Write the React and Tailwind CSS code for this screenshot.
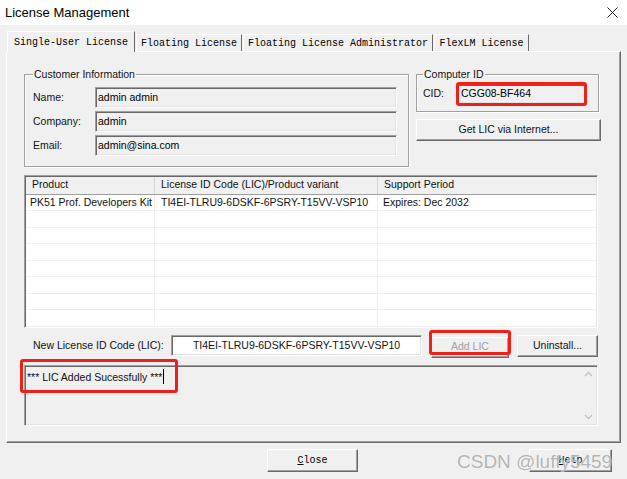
import React from "react";

const ui = { fontFamily: '"Liberation Sans", Arial, sans-serif' };
const mono = { fontFamily: '"Liberation Mono", "Courier New", monospace' };

const sunken =
  "border border-t-[#a0a0a0] border-l-[#a0a0a0] border-b-white border-r-white shadow-[inset_1px_1px_0_#696969,inset_-1px_-1px_0_#e3e3e3]";
const raised =
  "border border-t-white border-l-white border-b-[#696969] border-r-[#696969] shadow-[inset_-1px_-1px_0_#a0a0a0] bg-[#f0f0f0]";

const Tab = ({ label, width, active }) => (
  <div
    className={`flex justify-center border-l border-t border-r border-l-white border-t-white border-r-[#696969] text-[10px] text-black ${
      active ? "h-[21px] pt-[3px] z-10 -mb-px bg-[#f0f0f0]" : "h-[17px] pt-[1px] bg-[#f0f0f0]"
    }`}
    style={{ ...mono, width }}
  >
    {label}
  </div>
);

const Field = ({ label, value }) => (
  <div className="flex items-center h-[21px]">
    <span className="w-[62px] text-[10.5px] text-[#111]">{label}</span>
    <div className={`w-[302px] h-[21px] flex items-center px-[2px] text-[10.5px] bg-[#f0f0f0] ${sunken}`}>{value}</div>
  </div>
);

const RedBox = ({ className }) => (
  <div className={`absolute border-[3px] border-[#f02018] rounded-[3px] pointer-events-none ${className}`} />
);

export default function App() {
  return (
    <div className="relative w-[627px] h-[479px] bg-[#f0f0f0] overflow-hidden" style={ui}>
      {/* title bar */}
      <div className="h-[25px] bg-white flex items-center justify-between pl-[5px] pr-[9px]">
        <span className="text-[13px] text-black">License Management</span>
        <svg width="11" height="11" viewBox="0 0 11 11">
          <path d="M0.5 0.5 L10.5 10.5 M10.5 0.5 L0.5 10.5" stroke="#222" strokeWidth="1" fill="none" />
        </svg>
      </div>

      {/* tabs */}
      <div className="flex items-end h-[26px] pl-[7px] gap-[1px]">
        <Tab label="Single-User License" width={128} active />
        <Tab label="Floating License" width={106} />
        <Tab label="Floating License Administrator" width={190} />
        <Tab label="FlexLM License" width={95} />
      </div>

      {/* panel */}
      <div className="ml-[6px] w-[615px] h-[392px] border-l border-t border-l-white border-t-white border-r border-b border-r-[#696969] border-b-[#696969] shadow-[inset_-1px_-1px_0_#a0a0a0] pl-[17px] pt-[15px]">
        <div className="flex gap-[7px]">
          <fieldset className="w-[385px] h-[100px] border border-[#a0a0a0] shadow-[inset_1px_1px_0_#fff,1px_1px_0_#fff] px-[8px]">
            <legend className="px-[1px] text-[10.5px] leading-[14px] text-[#111]">Customer Information</legend>
            <div className="flex flex-col gap-[3px] mt-[6px]">
              <Field label="Name:" value="admin admin" />
              <Field label="Company:" value="admin" />
              <Field label="Email:" value="admin@sina.com" />
            </div>
          </fieldset>

          <div className="w-[185px] flex flex-col">
            <fieldset className="w-[183px] h-[45px] border border-[#a0a0a0] shadow-[inset_1px_1px_0_#fff,1px_1px_0_#fff] px-[6px]">
              <legend className="px-[1px] text-[10.5px] leading-[14px] text-[#111]">Computer ID</legend>
              <div className="flex items-center mt-[3px]">
                <span className="w-[34px] text-[10.5px] text-[#111]">CID:</span>
                <div className="relative">
                  <div className={`w-[129px] h-[20px] flex items-center px-[3px] text-[10.5px] bg-[#f0f0f0] ${sunken}`}>
                    CGG08-BF464
                  </div>
                  <RedBox className="-left-[1px] -top-[2px] w-[131px] h-[24px]" />
                </div>
              </div>
            </fieldset>
            <button className={`mt-[7px] w-[185px] h-[22px] text-[10.5px] text-[#111] ${raised}`}>
              Get LIC via Internet...
            </button>
          </div>
        </div>

        {/* license list */}
        <div className={`mt-[8px] w-[574px] h-[153px] bg-white flex flex-col ${sunken}`}>
          <div className="flex h-[18px] bg-[#f0f0f0] border-b border-[#a0a0a0] text-[10.5px] text-[#111] mx-px mt-px">
            <div className="w-[129px] pl-[6px] flex items-center border-r border-[#d5d5d5]">Product</div>
            <div className="w-[223px] pl-[6px] flex items-center border-r border-[#d5d5d5]">License ID Code (LIC)/Product variant</div>
            <div className="flex-1 pl-[6px] flex items-center">Support Period</div>
          </div>
          {[0, 1, 2, 3, 4, 5, 6, 7].map((i) => (
            <div key={i} className="flex h-[17px] border-b border-[#f0f0f0] text-[10.5px] text-[#111] mx-px">
              <div className="w-[129px] pl-[4px] flex items-center border-r border-[#f0f0f0] whitespace-nowrap overflow-hidden">
                {i === 0 ? "PK51 Prof. Developers Kit" : ""}
              </div>
              <div className="w-[223px] pl-[6px] flex items-center border-r border-[#f0f0f0] whitespace-nowrap overflow-hidden">
                {i === 0 ? "TI4EI-TLRU9-6DSKF-6PSRY-T15VV-VSP10" : ""}
              </div>
              <div className="flex-1 pl-[5px] flex items-center">{i === 0 ? "Expires: Dec 2032" : ""}</div>
            </div>
          ))}
        </div>

        {/* new LIC row */}
        <div className="flex items-center mt-[5px] h-[25px]">
          <span className="w-[147px] pl-[9px] text-[10.5px] text-[#111]">New License ID Code (LIC):</span>
          <div className={`w-[251px] h-[21px] bg-white flex items-center justify-center text-[10.5px] text-[#111] ${sunken}`}>
            TI4EI-TLRU9-6DSKF-6PSRY-T15VV-VSP10
          </div>
          <div className="relative ml-[9px]">
            <button className={`w-[78px] h-[21px] text-[10.5px] text-[#a0a0a0] ${raised}`}>Add LIC</button>
            <RedBox className="-left-[2px] -top-[3px] w-[82px] h-[25px]" />
          </div>
          <button className={`ml-[8px] w-[81px] h-[22px] text-[10.5px] text-[#111] ${raised}`}>Uninstall...</button>
        </div>

        {/* output */}
        <div className="relative mt-[7px]">
          <div className={`w-[574px] h-[61px] flex bg-[#f0f0f0] ${sunken}`}>
            <div className="flex-1 pl-[2px] pt-[4px] text-[10.5px] text-[#111] flex items-start">
              <span>*** LIC Added Sucessfully ***</span>
              <span className="ml-[1px] w-px h-[15px] bg-black -mt-[1px]" />
            </div>
            <div className="w-[17px] flex flex-col justify-between items-center py-[5px]">
              <svg width="9" height="6" viewBox="0 0 9 6">
                <path d="M1 5 L4.5 1.5 L8 5" stroke="#c0c0c0" strokeWidth="1.3" fill="none" />
              </svg>
              <svg width="9" height="6" viewBox="0 0 9 6">
                <path d="M1 1 L4.5 4.5 L8 1" stroke="#c0c0c0" strokeWidth="1.3" fill="none" />
              </svg>
            </div>
          </div>
          <RedBox className="-left-[4px] -top-[6px] w-[158px] h-[34px]" />
        </div>
      </div>

      {/* bottom buttons */}
      <div className="flex mt-[6px] pl-[267px]">
        <button className={`w-[91px] h-[23px] text-[10px] text-black ${raised}`} style={mono}>
          <span className="underline">C</span>lose
        </button>
        <button className={`ml-[171px] w-[83px] h-[23px] text-[10px] text-black ${raised}`} style={mono}>
          <span className="underline">H</span>elp
        </button>
      </div>

      {/* watermark */}
      <div
        className="absolute left-[457px] top-[448px] text-[19px] text-[#a0a0a0]/80 pointer-events-none [text-shadow:0_0_1px_#fff]"
        style={ui}
      >
        CSDN @luffy5459
      </div>
    </div>
  );
}
